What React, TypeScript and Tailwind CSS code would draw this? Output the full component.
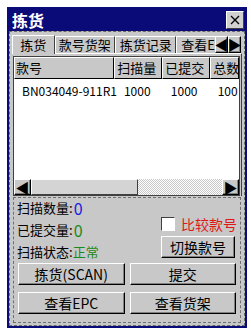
import React from "react";

const font = { fontFamily: '"Noto Sans CJK SC", "Liberation Sans", sans-serif' };

function Btn({ children, className = "" }: { children: React.ReactNode; className?: string }) {
  return (
    <div
      className={
        "flex items-center justify-center bg-[#c8c8c8] border border-t-white border-l-white border-b-black border-r-black shadow-[inset_-1px_-1px_0_#808080] text-[14px] text-black " +
        className
      }
    >
      {children}
    </div>
  );
}

function Tab({ label, active = false, w }: { label: string; active?: boolean; w: string }) {
  return (
    <div
      className={
        "flex items-center justify-center overflow-hidden whitespace-nowrap border-l border-t border-r border-l-white border-t-white border-r-[#404040] text-[13px] bg-[#c8c8c8] " +
        w +
        (active ? " h-[19px] -mb-px z-10" : " h-[17px]")
      }
    >
      {label}
    </div>
  );
}

export default function App() {
  return (
    <div className="w-[251px] h-[335px] bg-white pl-[7px] pt-[7px]" style={font}>
      <div className="w-[240px] h-[321px] border-2 border-[#0a0a78] bg-[#0a0a78] flex flex-col">
        {/* title bar */}
        <div className="h-[22px] flex items-center justify-between pl-[3px] pr-[1px]">
          <span className="text-white font-bold text-[16px] leading-none">拣货</span>
          <div className="w-[18px] h-[18px] bg-[#d0d0d0] border border-t-white border-l-white border-b-[#404040] border-r-[#404040] flex items-center justify-center">
            <svg width="10" height="10" viewBox="0 0 10 10">
              <path d="M1 1L9 9M9 1L1 9" stroke="black" strokeWidth="1.3" />
            </svg>
          </div>
        </div>
        <div className="flex-1 bg-[#c8c8c8] border border-dashed border-[#6a6a6a] flex flex-col px-[2px] pt-[2px] pb-[2px]">
          {/* tabs */}
          <div className="flex items-end h-[19px] relative">
            <Tab label="拣货" active w="w-[43px]" />
            <Tab label="款号货架" w="w-[61px]" />
            <Tab label="拣货记录" w="w-[62px]" />
            <div className="h-[17px] w-[39px] overflow-hidden border-l border-t border-l-white border-t-white text-[13px] flex items-center pl-[4px] whitespace-nowrap">
              查看E
            </div>
            <div className="flex h-[17px] ml-auto mr-[1px]">
              <Btn className="w-[13px] h-[17px] text-[9px]">◀</Btn>
              <Btn className="w-[13px] h-[17px] text-[9px]">▶</Btn>
            </div>
          </div>
          {/* tab page */}
          <div className="border-t border-white border-r border-r-[#404040] flex flex-col px-[1px] pt-[2px]">
            <div className="h-[140px] bg-white border border-[#404040] flex flex-col overflow-hidden">
              <div className="flex h-[22px] text-[13px] shrink-0 whitespace-nowrap">
                <div className="w-[105px] bg-[#c8c8c8] border border-t-white border-l-white border-b-black border-r-black pl-[1px] flex items-center">款号</div>
                <div className="w-[50px] bg-[#c8c8c8] border border-t-white border-l-white border-b-black border-r-black pl-[2px] flex items-center">扫描量</div>
                <div className="w-[50px] bg-[#c8c8c8] border border-t-white border-l-white border-b-black border-r-black pl-[2px] flex items-center">已提交</div>
                <div className="w-[30px] bg-[#c8c8c8] border border-t-white border-l-white border-b-black pl-[2px] flex items-center overflow-hidden">总数</div>
              </div>
              <div className="flex h-[20px] text-[12px] items-center whitespace-nowrap mt-[2px]">
                <div className="w-[105px] pl-[8px]">BN034049-911R1</div>
                <div className="w-[50px] pl-[7px]">1000</div>
                <div className="w-[50px] pl-[7px]">1000</div>
                <div className="w-[30px] pl-[7px] overflow-hidden">100</div>
              </div>
              <div className="flex-1" />
              {/* horizontal scrollbar */}
              <div className="flex h-[16px] shrink-0 bg-[repeating-conic-gradient(#c8c8c8_0_25%,#ffffff_0_50%)] bg-[length:2px_2px]">
                <Btn className="w-[17px] h-[16px] text-[9px]">◀</Btn>
                <div className="w-[107px] h-[16px] bg-[#d4d4d4] border border-t-white border-l-white border-b-[#404040] border-r-[#404040]" />
                <div className="flex-1" />
                <Btn className="w-[17px] h-[16px] text-[9px]">▶</Btn>
              </div>
            </div>
          </div>
          {/* lower panel */}
          <div className="flex-1 border border-dashed border-[#707070] mx-[1px] mt-[1px] px-[3px] flex flex-col text-[13px]">
            <div className="flex">
              <div className="flex flex-col gap-[3px] w-[150px]">
                <div className="h-[19px] flex items-center leading-none">
                  扫描数量:<span className="text-[#1a1ae0] text-[16px] leading-none ml-[1px]">0</span>
                </div>
                <div className="h-[19px] flex items-center leading-none">
                  已提交量:<span className="text-[#1a8a1a] text-[16px] leading-none ml-[1px]">0</span>
                </div>
                <div className="h-[19px] flex items-center leading-none">
                  扫描状态:<span className="text-[#1a8a1a]">正常</span>
                </div>
              </div>
              <div className="flex flex-col items-end flex-1 pt-[19px] gap-[5px]">
                <div className="flex items-center gap-[6px] h-[14px]">
                  <div className="w-[14px] h-[14px] bg-white border border-t-[#404040] border-l-[#404040] border-b-white border-r-white" />
                  <span className="text-[#e01818] text-[14px]">比较款号</span>
                </div>
                <Btn className="w-[74px] h-[22px] mr-[2px]">切换款号</Btn>
              </div>
            </div>
            <div className="grid grid-cols-2 gap-x-[5px] gap-y-[7px] mt-[2px] px-[1px]">
              <Btn className="h-[22px]">拣货(SCAN)</Btn>
              <Btn className="h-[22px]">提交</Btn>
              <Btn className="h-[22px]">查看EPC</Btn>
              <Btn className="h-[22px]">查看货架</Btn>
            </div>
          </div>
        </div>
      </div>
    </div>
  );
}
